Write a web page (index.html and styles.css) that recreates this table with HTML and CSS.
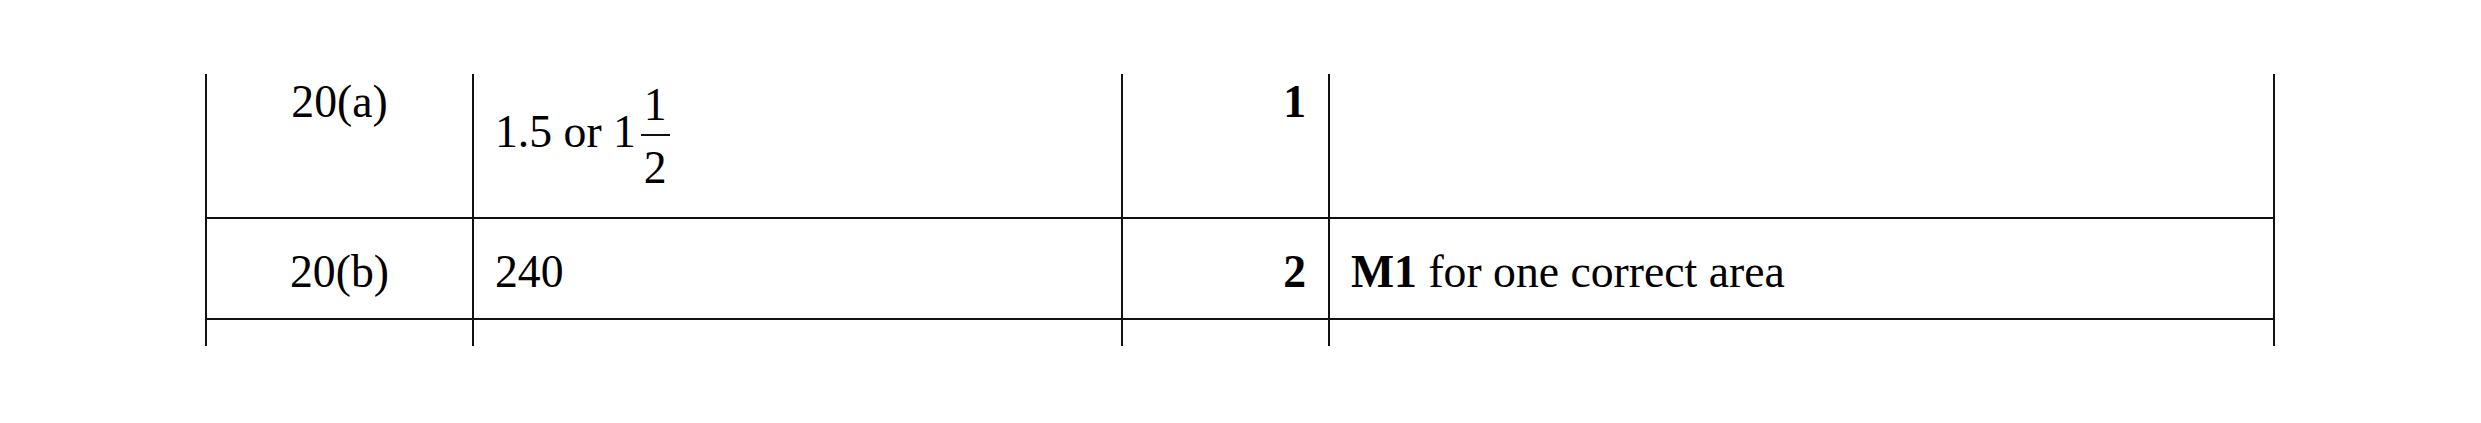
FILE: index.html
```html
<!DOCTYPE html>
<html lang="en">
<head>
<meta charset="utf-8">
<title>Mark scheme</title>
<link rel="stylesheet" href="styles.css">
</head>
<body>
<div class="sheet">
  <div class="mark-table">
    <div class="cell q row-a">20(a)</div>
    <div class="cell ans row-a"><span class="main">1.5 or 1</span><span class="frac"><span class="num">1</span><span class="bar"></span><span class="den">2</span></span></div>
    <div class="cell mark row-a">1</div>
    <div class="cell notes row-a last"></div>

    <div class="cell q row-b">20(b)</div>
    <div class="cell ans row-b">240</div>
    <div class="cell mark row-b">2</div>
    <div class="cell notes row-b last"><b>M1</b> for one correct area</div>

    <div class="cell q row-c"></div>
    <div class="cell ans row-c"></div>
    <div class="cell mark row-c"></div>
    <div class="cell notes row-c last"></div>
  </div>
</div>
</body>
</html>
```
FILE: styles.css
```css
html, body {
  margin: 0;
  padding: 0;
  background: #ffffff;
}

body {
  font-family: "Liberation Serif", "Times New Roman", serif;
  font-size: 45.7px;
  color: #000000;
}

.sheet {
  padding: 74px 0 0 205px;
}

.mark-table {
  display: grid;
  grid-template-columns: 267px 649px 207px 947px;
  grid-template-rows: 145px 101px 26px;
  width: 2070px;
}

.cell {
  box-sizing: border-box;
  border-left: 2px solid #111111;
  padding: 0 22px 0 21px;
  white-space: nowrap;
}

.cell.last {
  border-right: 2px solid #111111;
}

.row-a,
.row-b {
  border-bottom: 2px solid #111111;
}

.row-a {
  padding-top: 1px;
}

.row-b {
  padding-top: 26px;
}

.q {
  text-align: center;
  padding-left: 0;
  padding-right: 0;
}

.mark {
  text-align: right;
  font-weight: bold;
}

.ans.row-a {
  padding-top: 16px;
}

.frac {
  display: inline-flex;
  flex-direction: column;
  align-items: stretch;
  vertical-align: 27px;
  margin-left: 5px;
}

.num,
.den {
  line-height: 30px;
  padding: 0 3px;
  text-align: center;
}

.bar {
  height: 2px;
  background: #111111;
  margin-top: 14px;
}

.den {
  margin-top: 17px;
}
```
